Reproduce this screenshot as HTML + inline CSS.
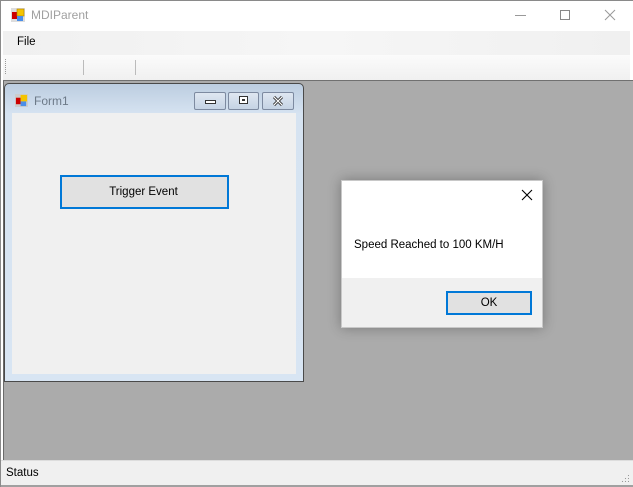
<!DOCTYPE html>
<html><head><meta charset="utf-8"><style>
*{margin:0;padding:0;box-sizing:border-box}
body{width:633px;height:487px;position:relative;overflow:hidden;background:#fff;font-family:"Liberation Sans",sans-serif;font-size:12px;color:#000}
.a{position:absolute}
</style></head><body>
<div class="a" style="left:0;top:0;width:633px;height:1px;background:#8a8a8a"></div>
<div class="a" style="left:0;top:0;width:1px;height:487px;background:#8a8a8a"></div>
<div class="a" style="left:1px;top:1px;width:632px;height:30px;background:#fff"></div>
<svg class="a" style="left:11px;top:8px" width="14" height="14" viewBox="0 0 14 14">
<rect x="0" y="0" width="14" height="14" fill="#ddd"/><rect x="1" y="4" width="5" height="7" fill="#c00"/><rect x="6" y="1" width="7" height="7" fill="#f5c400" stroke="#b08000" stroke-width=".6"/><rect x="6" y="8" width="6" height="5" fill="#4a8ee8"/></svg>
<div class="a" style="left:31px;top:8px;font-size:12px;color:#a0a0a0">MDIParent</div>
<div class="a" style="left:515px;top:15px;width:11px;height:1px;background:#999"></div>
<div class="a" style="left:560px;top:10px;width:10px;height:10px;border:1px solid #888"></div>
<svg class="a" style="left:604px;top:9px" width="12" height="12" viewBox="0 0 12 12"><path d="M1 1L11 11M11 1L1 11" stroke="#999" stroke-width="1"/></svg>
<div class="a" style="left:3px;top:31px;width:627px;height:24px;background:linear-gradient(90deg,#f0f0f0,#f6f6f6 50%,#f0f0f0)"></div>
<div class="a" style="left:17px;top:36px;font-size:11.5px">File</div>
<div class="a" style="left:3px;top:55px;width:627px;height:25px;background:linear-gradient(#fbfbfb,#f0f0f0)"></div>
<div class="a" style="left:5px;top:59px;width:1px;height:15px;border-left:1px dotted #999"></div>
<div class="a" style="left:83px;top:60px;width:1px;height:15px;background:#bbb"></div>
<div class="a" style="left:135px;top:60px;width:1px;height:15px;background:#bbb"></div>
<div class="a" style="left:3px;top:80px;width:630px;height:1px;background:#707070"></div>
<div class="a" style="left:3px;top:81px;width:630px;height:379px;background:#ababab"></div>
<div class="a" style="left:3px;top:81px;width:1px;height:379px;background:#6a6a6a"></div>
<div class="a" style="left:1px;top:460px;width:632px;height:26px;background:#f0f0f0;border-top:1px solid #ddd"></div>
<div class="a" style="left:1px;top:485px;width:632px;height:2px;background:#a0a0a0"></div>
<div class="a" style="left:6px;top:467px;font-size:11.5px">Status</div>
<div class="a" style="left:621px;top:474px;width:8px;height:8px;background:radial-gradient(circle,#999 0.6px,transparent 0.8px) 0 0/3px 3px;clip-path:polygon(100% 0,100% 100%,0 100%)"></div>
<div class="a" style="left:4px;top:83px;width:300px;height:299px;background:linear-gradient(#bccde0,#d6e3f1 30px,#d8e5f3);border:1px solid #4a4a4a;border-radius:5px 5px 0 0"></div>
<svg class="a" style="left:15px;top:94px" width="13" height="13" viewBox="0 0 14 14">
<rect x="0" y="0" width="14" height="14" fill="#ccc"/><rect x="1" y="4" width="5" height="7" fill="#c00"/><rect x="6" y="1" width="7" height="7" fill="#f5c400"/><rect x="6" y="8" width="6" height="5" fill="#4a8ee8"/></svg>
<div class="a" style="left:34px;top:94px;font-size:12px;color:#6d7a88">Form1</div>
<div class="a" style="left:194px;top:92px;width:32px;height:18px;border:1px solid #7d8aa0;border-radius:2px;background:linear-gradient(#dfe7f1,#c5d3e4)"><div class="a" style="left:10px;top:7px;width:11px;height:4px;border:1px solid #333;background:#fff"></div></div>
<div class="a" style="left:228px;top:92px;width:31px;height:18px;border:1px solid #7d8aa0;border-radius:2px;background:linear-gradient(#dfe7f1,#c5d3e4)"><div class="a" style="left:10px;top:3px;width:9px;height:8px;border:1px solid #333;background:#fff"><div class="a" style="left:2px;top:2px;width:3px;height:2px;background:#333"></div></div></div>
<div class="a" style="left:262px;top:92px;width:32px;height:18px;border:1px solid #7d8aa0;border-radius:2px;background:linear-gradient(#dfe7f1,#c5d3e4)"><svg class="a" style="left:9px;top:3px" width="12" height="10" viewBox="0 0 12 10"><path d="M2 1L10 9M10 1L2 9" stroke="#333" stroke-width="3"/><path d="M2 1L10 9M10 1L2 9" stroke="#fff" stroke-width="1.2"/></svg></div>
<div class="a" style="left:12px;top:113px;width:284px;height:261px;background:#f0f0f0"></div>
<div class="a" style="left:60px;top:175px;width:169px;height:34px;border:2px solid #0078d7;background:#e1e1e1;text-align:center;line-height:31px;font-size:11.5px;padding-right:2px">Trigger Event</div>
<div class="a" style="left:341px;top:180px;width:202px;height:148px;background:#fff;border:1px solid #c8c8c8;box-shadow:0 0 12px rgba(0,0,0,.3)"></div>
<div class="a" style="left:342px;top:278px;width:200px;height:49px;background:#f0f0f0"></div>
<svg class="a" style="left:521px;top:189px" width="12" height="12" viewBox="0 0 12 12"><path d="M1 1L11 11M11 1L1 11" stroke="#000" stroke-width="1.1"/></svg>
<div class="a" style="left:354px;top:239px;font-size:11.5px">Speed Reached to 100 KM/H</div>
<div class="a" style="left:446px;top:291px;width:86px;height:24px;border:2px solid #0078d7;background:#e1e1e1;text-align:center;line-height:21px;font-size:11.5px">OK</div>
</body></html>
